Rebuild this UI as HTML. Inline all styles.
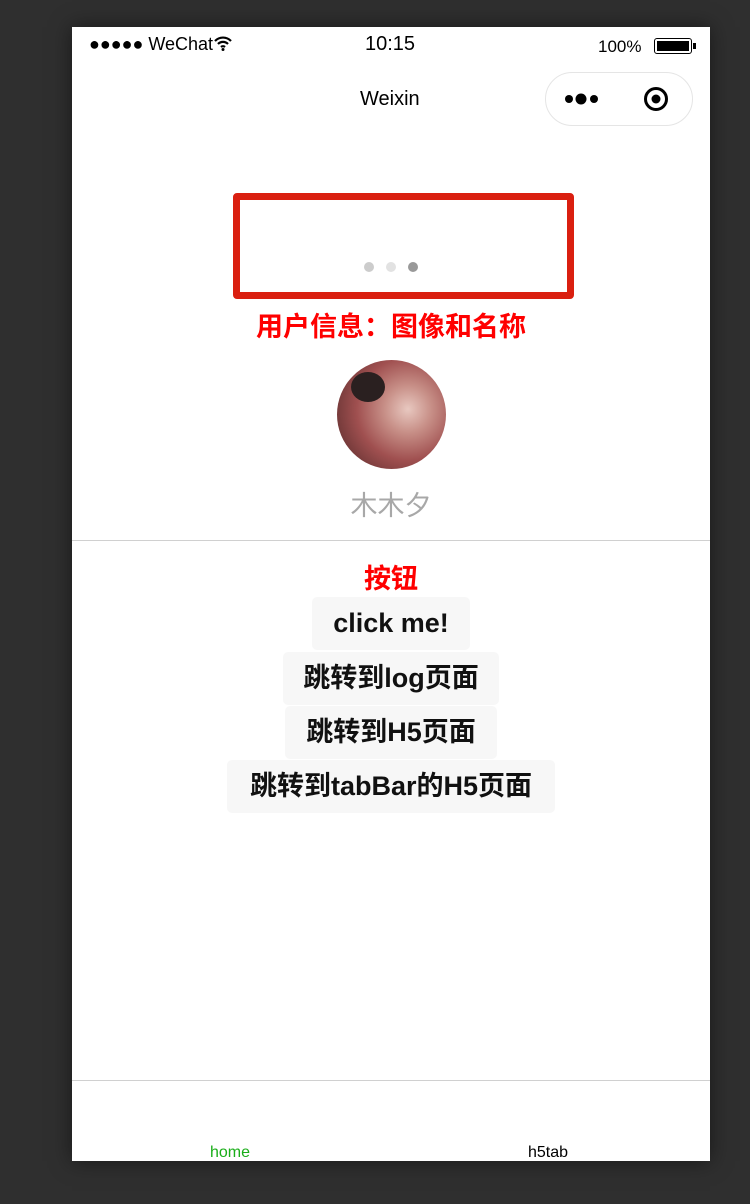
<!DOCTYPE html><html><head><meta charset="utf-8"><style>
body{margin:0;width:750px;height:1204px;background:#2f2f2f;position:relative;overflow:hidden;font-family:"Liberation Sans","Noto Sans CJK SC",sans-serif}
.ph{position:absolute;left:72px;top:27px;width:638px;height:1134px;background:#fff;box-shadow:0 0 20px rgba(0,0,0,.5)}
.a{position:absolute}
.btn{position:absolute;background:#f7f7f7;border-radius:5px;font-weight:bold;font-size:27px;color:#111;text-align:center;line-height:53px}
</style></head><body>
<div class="ph"></div>
<div class="a" style="left:89px;top:34px;font-size:18px">●●●●● WeChat<svg width="20" height="16" viewBox="0 0 20 16" style="vertical-align:-1px"><path d="M2 6a11 11 0 0 1 16 0M5 9a7 7 0 0 1 10 0M8 12a3 3 0 0 1 4 0" stroke="#000" stroke-width="2.2" fill="none"/><circle cx="10" cy="14.5" r="1.5"/></svg></div>
<div class="a" style="left:365px;top:33px;font-size:20px">10:15</div>
<div class="a" style="left:598px;top:37px;font-size:17px">100%</div>
<div class="a" style="left:654px;top:38px;width:36px;height:14px;border:1.5px solid #000;border-radius:3px"><div style="margin:2px;height:10px;background:#000"></div></div>
<div class="a" style="left:693px;top:43px;width:3px;height:6px;background:#000"></div>
<div class="a" style="left:360px;top:88px;font-size:20px">Weixin</div>
<div class="a" style="left:545px;top:72px;width:146px;height:52px;border:1.5px solid #e5e5e5;border-radius:27px"></div>
<svg class="a" style="left:560px;top:84px" width="130" height="30"><circle cx="9" cy="15" r="4"/><circle cx="21" cy="15" r="5.5"/><circle cx="34" cy="15" r="4"/><circle cx="96" cy="15" r="10.5" fill="none" stroke="#000" stroke-width="3"/><circle cx="96" cy="15" r="4.5"/></svg>
<div class="a" style="left:233px;top:193px;width:327px;height:92px;border:7px solid #da1f10;border-radius:4px"></div>
<svg class="a" style="left:360px;top:258px" width="60" height="18"><circle cx="9" cy="9" r="5" fill="#ccc"/><circle cx="31" cy="9" r="5" fill="#e2e2e2"/><circle cx="53" cy="9" r="5" fill="#999"/></svg>
<div class="a" style="left:0;width:782px;text-align:center;top:305px;font-size:27px;font-weight:bold;color:#f00">用户信息：图像和名称</div>
<div class="a" style="left:337px;top:360px;width:109px;height:109px;border-radius:50%;background:radial-gradient(circle at 65% 45%,#e8c8c0 0,#c89088 25%,#a05050 55%,#703838 80%)"><div style="position:absolute;left:14px;top:12px;width:34px;height:30px;border-radius:50%;background:#2a2020"></div></div>
<div class="a" style="left:0;width:782px;text-align:center;top:484px;font-size:27px;color:#a8a8a8">木木夕</div>
<div class="a" style="left:72px;top:540px;width:638px;height:1px;background:#d0d0d0"></div>
<div class="a" style="left:0;width:782px;text-align:center;top:557px;font-size:27px;font-weight:bold;color:#f00">按钮</div>
<div class="btn" style="left:312px;top:597px;width:158px">click me!</div>
<div class="btn" style="left:283px;top:652px;width:216px">跳转到log页面</div>
<div class="btn" style="left:285px;top:706px;width:212px">跳转到H5页面</div>
<div class="btn" style="left:227px;top:760px;width:328px">跳转到tabBar的H5页面</div>
<div class="a" style="left:72px;top:1080px;width:638px;height:1px;background:#d0d0d0"></div>
<div class="a" style="left:210px;top:1144px;font-size:16px;color:#1aad19">home</div>
<div class="a" style="left:528px;top:1144px;font-size:16px;color:#000">h5tab</div>
</body></html>
